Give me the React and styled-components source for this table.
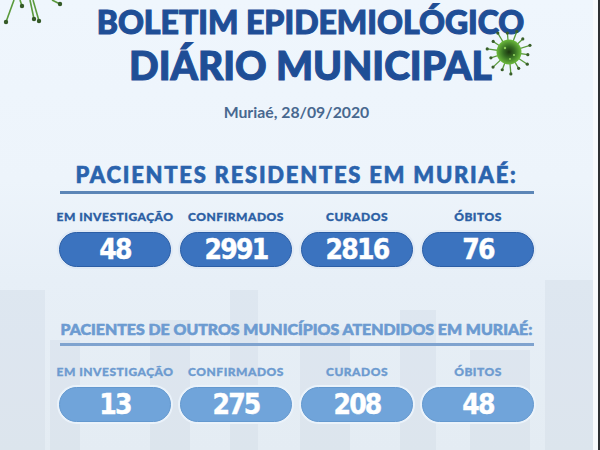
import React from "react";
import styled, { createGlobalStyle } from "styled-components";

const GlobalStyle = createGlobalStyle`
  html, body {
    margin: 0;
    padding: 0;
    width: 600px;
    height: 450px;
    overflow: hidden;
  }
`;

const Page = styled.div`
  display: flex;
  width: 600px;
  height: 450px;
  overflow: hidden;
`;

const Poster = styled.main`
  position: relative;
  flex: 1;
  display: flex;
  flex-direction: column;
  align-items: center;
  background: linear-gradient(
    180deg,
    #eff6fd 0%,
    #edf4fb 40%,
    #e7eff7 62%,
    #e4ecf3 100%
  );
  font-family: "Lato", "Noto Sans", sans-serif;
`;

const Edge = styled.div`
  width: 5px;
  background: #f8fafc;
  border-right: 2px solid #2e3033;
`;

const Skyline = styled.svg`
  position: absolute;
  left: 0;
  bottom: 0;
  width: 100%;
  height: 190px;
  opacity: 0.13;
  pointer-events: none;
`;

const Header = styled.header`
  display: flex;
  flex-direction: column;
  align-items: center;
  padding-top: 6px;
`;

const Titles = styled.div`
  display: flex;
  flex-direction: column;
  align-items: center;
  padding-left: 28px;
  color: #1f4e96;
  -webkit-text-stroke: 1.1px #1f4e96;
`;

const TitleTop = styled.h1`
  margin: 0;
  font-size: 32px;
  line-height: 32px;
  font-weight: 900;
`;

const TitleMain = styled.h2`
  margin: 7px 0 0;
  font-size: 39px;
  line-height: 40px;
  font-weight: 900;
`;

const DateLine = styled.p`
  margin: 18px 0 0;
  font-size: 15.8px;
  line-height: 18px;
  font-weight: 700;
  color: #48688f;
`;

const Section = styled.section`
  position: relative;
  display: flex;
  flex-direction: column;
  align-items: center;
  margin-top: ${(p) => p.$top}px;
`;

const Heading = styled.h3`
  box-sizing: border-box;
  margin: 0;
  width: 474px;
  padding-bottom: 4px;
  text-align: center;
  white-space: nowrap;
  font-size: ${(p) => (p.$light ? 15.9 : 22)}px;
  line-height: ${(p) => (p.$light ? 20 : 24)}px;
  letter-spacing: ${(p) => (p.$light ? 0 : 1.75)}px;
  font-weight: 900;
  color: ${(p) => (p.$light ? "#6c9bd1" : "#2a63ad")};
  -webkit-text-stroke: 0.6px ${(p) => (p.$light ? "#6c9bd1" : "#2a63ad")};
  border-bottom: 3px solid ${(p) => (p.$light ? "#7fa3cf" : "#5c86b7")};
`;

const Stats = styled.div`
  display: grid;
  grid-template-columns: repeat(4, 112px);
  column-gap: 9px;
  margin-top: ${(p) => p.$gap}px;
`;

const Stat = styled.div`
  display: flex;
  flex-direction: column;
  align-items: center;
  gap: 9px;
`;

const Label = styled.span`
  font-size: 12px;
  line-height: 13px;
  font-weight: 900;
  letter-spacing: 0.5px;
  white-space: nowrap;
  color: ${(p) => (p.$light ? "#6d9bd0" : "#2c5fa4")};
  -webkit-text-stroke: 0.35px ${(p) => (p.$light ? "#6d9bd0" : "#2c5fa4")};
`;

const Pill = styled.div`
  box-sizing: border-box;
  width: 112px;
  height: 35px;
  border-radius: 18px;
  display: flex;
  align-items: center;
  justify-content: center;
  background: ${(p) => (p.$light ? "#70a4da" : "#3b73bf")};
  border: 1.5px solid ${(p) => (p.$light ? "#6499cf" : "#2b5ea6")};
  box-shadow: 0 0 0 2px ${(p) => (p.$light ? "#eaf2fa" : "#dfe9f5")};
  color: #fff;
  font-family: "DejaVu Sans Condensed", "DejaVu Sans", sans-serif;
  font-stretch: condensed;
  font-weight: 700;
  font-size: 28px;
  line-height: 1;
  letter-spacing: -1.8px;
  -webkit-text-stroke: 0.4px #fff;
`;

const VirusRight = styled.svg`
  position: absolute;
  left: 483px;
  top: 26px;
  width: 52px;
  height: 52px;
`;

const VirusCorner = styled.svg`
  position: absolute;
  left: 0;
  top: 0;
  width: 70px;
  height: 30px;
`;

const Virus = ({ id }) => {
  const spikes = Array.from({ length: 14 }, (_, i) => (i * 360) / 14 + 8);
  return (
    <>
      <defs>
        <radialGradient id={id} cx="50%" cy="50%" r="50%">
          <stop offset="0%" stopColor="#1c3510" />
          <stop offset="45%" stopColor="#356d22" />
          <stop offset="100%" stopColor="#6cbb3c" />
        </radialGradient>
      </defs>
      {spikes.map((a, i) => {
        const r = (a * Math.PI) / 180;
        const len = i % 2 ? 22 : 19;
        const x = 26 + Math.cos(r) * len;
        const y = 26 + Math.sin(r) * len;
        return (
          <g key={i}>
            <line
              x1={26}
              y1={26}
              x2={x}
              y2={y}
              stroke="#5a9a3c"
              strokeWidth="1.3"
            />
            <circle cx={x} cy={y} r="1.6" fill="#3a5f2a" />
          </g>
        );
      })}
      <circle cx="26" cy="26" r="12.5" fill={`url(#${id})`} />
      <circle cx="22" cy="22" r="1.2" fill="#8fd05c" />
      <circle cx="31" cy="29" r="1.1" fill="#8fd05c" />
      <circle cx="27" cy="33" r="1" fill="#8fd05c" />
    </>
  );
};

const residents = [
  ["EM INVESTIGAÇÃO", "48"],
  ["CONFIRMADOS", "2991"],
  ["CURADOS", "2816"],
  ["ÓBITOS", "76"],
];

const visitors = [
  ["EM INVESTIGAÇÃO", "13"],
  ["CONFIRMADOS", "275"],
  ["CURADOS", "208"],
  ["ÓBITOS", "48"],
];

const StatRow = ({ items, light, gap }) => (
  <Stats $gap={gap}>
    {items.map(([label, value]) => (
      <Stat key={label}>
        <Label $light={light}>{label}</Label>
        <Pill $light={light}>{value}</Pill>
      </Stat>
    ))}
  </Stats>
);

export default function App() {
  return (
    <>
      <GlobalStyle />
      <Page>
        <Poster>
          <Skyline viewBox="0 0 593 190" preserveAspectRatio="none">
            <g fill="#a9b8c9">
              <rect x="0" y="30" width="45" height="160" />
              <rect x="50" y="80" width="30" height="110" />
              <rect x="150" y="60" width="40" height="130" />
              <rect x="230" y="30" width="28" height="160" />
              <rect x="300" y="70" width="50" height="120" />
              <rect x="400" y="50" width="36" height="140" />
              <rect x="470" y="90" width="60" height="100" />
              <rect x="545" y="20" width="48" height="170" />
            </g>
          </Skyline>
          <VirusCorner viewBox="0 0 70 30">
            <g stroke="#5a9a3c" strokeWidth="1.6" fill="#355a27">
              <line x1="14" y1="0" x2="6" y2="22" />
              <line x1="20" y1="0" x2="22" y2="6" />
              <line x1="30" y1="0" x2="34" y2="19" />
              <line x1="33" y1="0" x2="39" y2="21" />
              <line x1="52" y1="0" x2="60" y2="4" />
              <circle cx="6" cy="22" r="2.2" stroke="none" />
              <circle cx="22" cy="6" r="2.2" stroke="none" />
              <circle cx="34" cy="19" r="2.2" stroke="none" />
              <circle cx="39" cy="21" r="2.2" stroke="none" />
              <circle cx="60" cy="4" r="2.2" stroke="none" />
            </g>
          </VirusCorner>
          <Header>
            <Titles>
              <TitleTop>BOLETIM EPIDEMIOLÓGICO</TitleTop>
              <TitleMain>DIÁRIO MUNICIPAL</TitleMain>
            </Titles>
            <DateLine>Muriaé, 28/09/2020</DateLine>
          </Header>
          <VirusRight viewBox="0 0 52 52">
            <Virus id="virusBody" />
          </VirusRight>
          <Section $top={42}>
            <Heading>PACIENTES RESIDENTES EM MURIAÉ:</Heading>
            <StatRow items={residents} gap={16} />
          </Section>
          <Section $top={52}>
            <Heading $light>
              PACIENTES DE OUTROS MUNICÍPIOS ATENDIDOS EM MURIAÉ:
            </Heading>
            <StatRow items={visitors} light gap={19} />
          </Section>
        </Poster>
        <Edge />
      </Page>
    </>
  );
}
